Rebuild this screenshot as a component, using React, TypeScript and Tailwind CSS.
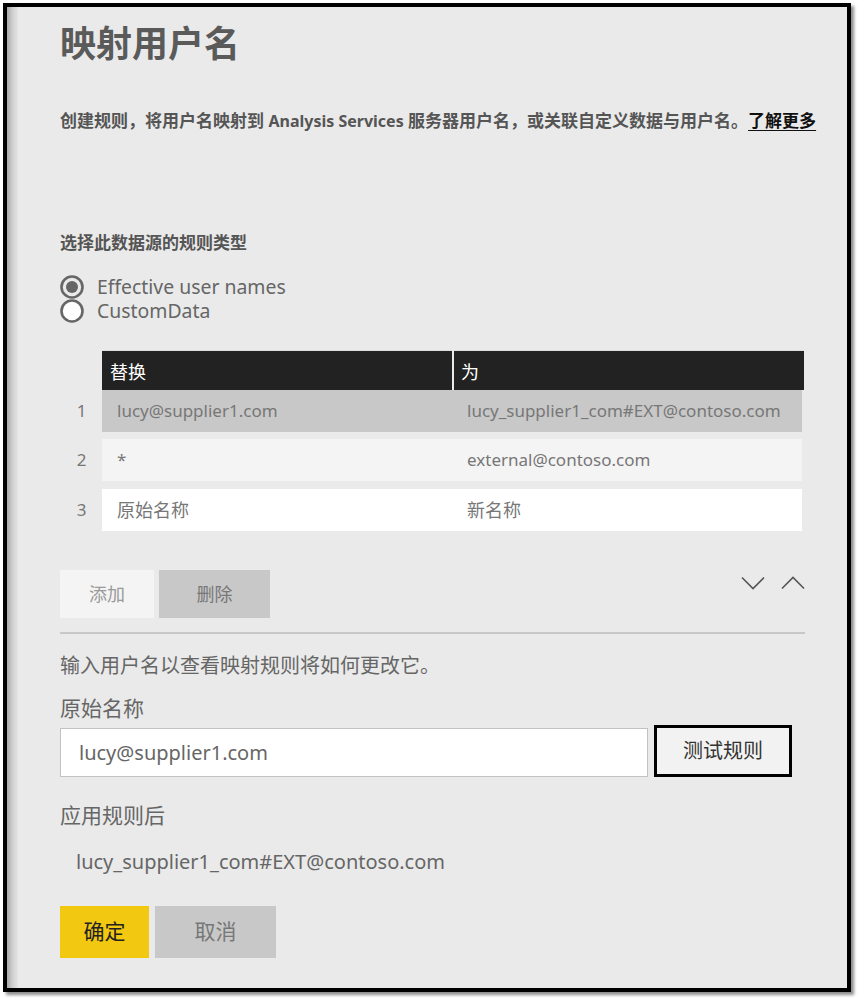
import React from "react";

const font = { fontFamily: '"Segoe UI", "Noto Sans", "Noto Sans CJK SC", sans-serif' };

function Radio({ checked }: { checked: boolean }) {
  return (
    <svg width="24" height="24" viewBox="0 0 24 24" className="shrink-0">
      <circle cx="12" cy="12" r="10.5" fill={checked ? "none" : "#ffffff"} stroke="#666666" strokeWidth="2.6" />
      {checked && <circle cx="12" cy="12" r="6" fill="#666666" />}
    </svg>
  );
}

function Chevron({ up }: { up?: boolean }) {
  return (
    <svg width="24" height="14" viewBox="0 0 24 14">
      <polyline
        points={up ? "1,12.5 12,1.5 23,12.5" : "1,1.5 12,12.5 23,1.5"}
        fill="none"
        stroke="#555555"
        strokeWidth="1.6"
      />
    </svg>
  );
}

const rows = [
  { n: "1", a: "lucy@supplier1.com", b: "lucy_supplier1_com#EXT@contoso.com", bg: "bg-[#c8c8c8]", mt: "", sa: "text-[17px]", sb: "text-[17px]" },
  { n: "2", a: "*", b: "external@contoso.com", bg: "bg-[#f4f4f4]", mt: "mt-[7px]", sa: "text-[17px]", sb: "text-[17px]" },
  { n: "3", a: "原始名称", b: "新名称", bg: "bg-white", mt: "mt-[8px]", sa: "text-[18px]", sb: "text-[18px]" },
];

export default function App() {
  return (
    <div className="w-[860px] h-[1002px] bg-white p-[3px]" style={font}>
      <div className="w-[848px] h-[989px] border-4 border-black bg-[#eaeaea] flex shadow-[3px_3px_3px_rgba(0,0,0,0.45)]">
        <div className="w-[11px] h-full bg-gradient-to-r from-[#a8a8a8] via-[#cfcfcf] to-[#e4e4e4] shrink-0" />
        <div className="flex-1 min-w-0 pl-[42px] pr-[42px] flex flex-col">
          <h1 className="mt-[19px] text-[36px] leading-[36px] font-bold text-[#5a5a5a]">映射用户名</h1>
          <p className="mt-[47px] text-[17px] leading-[24px] font-bold text-[#555555] whitespace-nowrap">
            创建规则，将用户名映射到 <span className="text-[16px]">Analysis Services</span> 服务器用户名，或关联自定义数据与用户名。
            <span className="text-[#111111] underline underline-offset-[3px]">了解更多</span>
          </p>
          <p className="mt-[98px] text-[17px] leading-[24px] font-bold text-[#555555]">选择此数据源的规则类型</p>
          <div className="mt-[20px] flex flex-col">
            <div className="h-[24px] flex items-center gap-[13px]">
              <Radio checked />
              <span className="text-[19.4px] leading-[20px] text-[#666666]">Effective user names</span>
            </div>
            <div className="h-[24px] flex items-center gap-[13px]">
              <Radio checked={false} />
              <span className="text-[19.4px] leading-[20px] text-[#666666]">CustomData</span>
            </div>
          </div>

          <div className="mt-[27px] flex flex-col">
            <div className="flex pl-[42px]">
              <div className="h-[40px] w-[350px] bg-[#222222] border-t border-[#dddddd] flex items-center pl-[8px] text-[18px] text-white pt-[3px]">
                替换
              </div>
              <div className="h-[40px] w-[2px] bg-[#eaeaea]" />
              <div className="h-[40px] w-[350px] bg-[#222222] border-t border-[#dddddd] flex items-center pl-[7px] text-[18px] text-white pt-[3px]">
                为
              </div>
            </div>
            {rows.map((r) => (
              <div key={r.n} className={`flex ${r.mt}`}>
                <div className="w-[42px] flex items-center justify-center text-[17px] text-[#777777] pl-[1px]">{r.n}</div>
                <div className={`w-[700px] h-[42px] ${r.bg} flex items-center text-[#777777]`}>
                  <div className={`w-[352px] pl-[15px] whitespace-nowrap ${r.sa}`}>{r.a}</div>
                  <div className={`pl-[13px] whitespace-nowrap ${r.sb}`}>{r.b}</div>
                </div>
              </div>
            ))}
          </div>

          <div className="mt-[39px] flex items-start">
            <button className="w-[94px] h-[48px] bg-[#f4f4f4] text-[18px] text-[#9a9a9a]">添加</button>
            <button className="ml-[5px] w-[111px] h-[48px] bg-[#c8c8c8] text-[18px] text-[#777777]">删除</button>
            <div className="ml-auto mt-[6px] flex gap-[16px]">
              <Chevron />
              <Chevron up />
            </div>
          </div>
          <div className="mt-[14px] h-[2px] w-[745px] bg-[#c8c8c8]" />

          <p className="mt-[18px] text-[20px] leading-[28px] text-[#666666]">输入用户名以查看映射规则将如何更改它。</p>
          <p className="mt-[14px] text-[21px] leading-[28px] text-[#666666]">原始名称</p>
          <div className="mt-[3px] flex items-end">
            <div className="w-[588px] h-[49px] bg-white border border-[#c2c2c2] flex items-center pl-[18px] text-[20px] text-[#666666]">
              lucy@supplier1.com
            </div>
            <button className="ml-[6px] w-[138px] h-[52px] border-[3px] border-black bg-[#f2f2f2] text-[20px] text-[#333333]">
              测试规则
            </button>
          </div>
          <p className="mt-[24px] text-[21px] leading-[28px] text-[#666666]">应用规则后</p>
          <p className="mt-[19px] pl-[16px] text-[20px] leading-[28px] text-[#666666]">lucy_supplier1_com#EXT@contoso.com</p>
          <div className="mt-[30px] flex">
            <button className="w-[89px] h-[52px] bg-[#f2c811] text-[21px] text-[#222222]">确定</button>
            <button className="ml-[6px] w-[121px] h-[52px] bg-[#c8c8c8] text-[21px] text-[#777777]">取消</button>
          </div>
        </div>
      </div>
    </div>
  );
}
